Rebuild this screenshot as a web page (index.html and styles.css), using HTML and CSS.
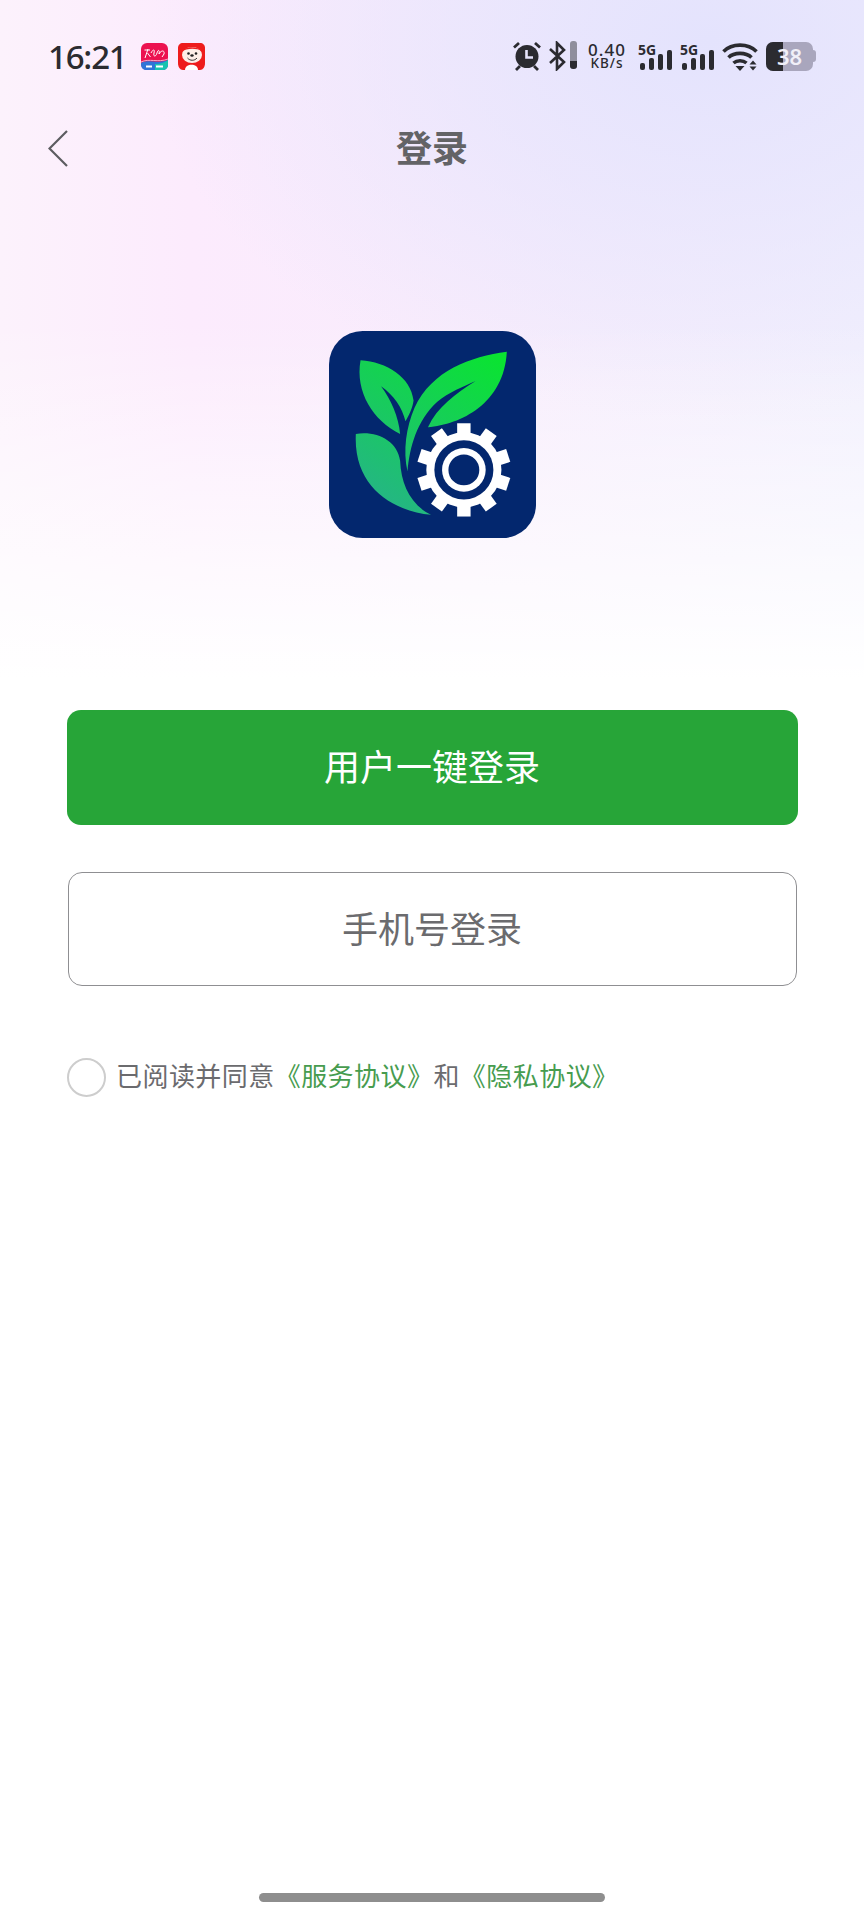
FILE: index.html
```html
<!DOCTYPE html>
<html lang="zh-CN">
<head>
    <meta charset="UTF-8">
    <meta name="viewport" content="width=device-width, initial-scale=1.0">
    <title>登录</title>
    <link rel="stylesheet" href="styles.css">
</head>
<body>
    <div class="page">
        <div class="status-bar">
            <span class="time">16:21</span>
            <svg class="app-icon" viewBox="0 0 27 27">
                <rect width="27" height="27" rx="6" fill="#ec1250"/>
                <path d="M0 20 C8 16 17 21 27 17 V21 C27 25 25 27 21 27 H6 C2 27 0 25 0 21 Z" fill="#2f74d8"/>
                <path d="M14 21 C18 21.500 23 20 27 17 V21 C27 25 25 27 21 27 H14 Z" fill="#19c3b0"/>
                <path d="M0 19 C8 15 17 20 27 16" stroke="#f7a8c8" stroke-width="1" fill="none"/>
                <path d="M3.500 7 H9 M7 6 L4 15 M6.500 10 L9.500 14 M10 10 C12 6 14 6 13 10 C12 14 15 14 16 10 C17 6 19 7 18 11 C20 7 24 7 23 11 L21 14" stroke="#fff" stroke-width="1" fill="none"/>
                <path d="M5 23.500 H11 M15 23.500 H22" stroke="#fff" stroke-width="1.800"/>
            </svg>
            <svg class="app-icon app-icon-last" viewBox="0 0 27 27">
                <path d="M5 0 H22 C25 0 27 2 27 5 V20 C27 24 25 27 22 27 H5 C2 27 0 24 0 20 V5 C0 2 2 0 5 0 Z" fill="#ee1c1c"/>
                <path d="M7 27 C7 20 20 20 20 27 Z" fill="#fff"/>
                <ellipse cx="14" cy="12" rx="10" ry="8" fill="#fdeee8"/>
                <path d="M3 9 C6 3 20 3 24 8 C18 5 9 5 3 9 Z" fill="#ee1c1c"/>
                <circle cx="10.500" cy="10.500" r="1.300" fill="#222"/>
                <circle cx="18" cy="10.500" r="1.300" fill="#222"/>
                <ellipse cx="14" cy="12.500" rx="1.700" ry="1.200" fill="#222"/>
                <path d="M9.500 15 C12 18 16.500 18 19 15" stroke="#222" stroke-width="0.900" fill="none"/>
            </svg>
            <div class="status-right">
                <svg class="ic-alarm" viewBox="0 0 28 30">
                    <circle cx="14" cy="15.500" r="11.500" fill="#2b2b30"/>
                    <path d="M13.500 9 V16.500 H20" stroke="#e6e4fb" stroke-width="2.600" fill="none"/>
                    <path d="M1 6.500 L6 2 M27 6.500 L22 2 M7 25 L3 29 M21 25 L25 29" stroke="#2b2b30" stroke-width="2.800"/>
                </svg>
                <svg class="ic-bt" viewBox="0 0 28 30">
                    <path d="M1 8 L15 21 L8 28 V2 L15 9 L1 22" stroke="#2b2b30" stroke-width="2.600" fill="none"/>
                    <rect x="21" y="0" width="7" height="28" rx="3" fill="#8f8e9c"/>
                    <path d="M21 20 H28 V25 C28 27 26.500 28 24.500 28 C22.500 28 21 27 21 25 Z" fill="#2b2b30"/>
                </svg>
                <div class="speed">
                    <span class="speed-num">0.40</span>
                    <span class="speed-unit">KB/s</span>
                </div>
                <div class="signal">
                    <span class="signal-label">5G</span>
                    <div class="bars">
                        <i class="bar bar-1"></i><i class="bar bar-2"></i><i class="bar bar-3"></i><i class="bar bar-4"></i>
                    </div>
                </div>
                <div class="signal">
                    <span class="signal-label">5G</span>
                    <div class="bars">
                        <i class="bar bar-1"></i><i class="bar bar-2"></i><i class="bar bar-3"></i><i class="bar bar-4"></i>
                    </div>
                </div>
                <svg class="ic-wifi" viewBox="0 0 38 29">
                    <path d="M1.500 9.500 C10 1 26 1 34.500 9.500" stroke="#2b2b30" stroke-width="3.600" fill="none"/>
                    <path d="M6.500 15.500 C12 10 24 10 29.500 15.500" stroke="#2b2b30" stroke-width="3.600" fill="none"/>
                    <path d="M11.500 21 C15 18 21 18 24.500 21" stroke="#2b2b30" stroke-width="3.600" fill="none"/>
                    <path d="M13.500 24 H22.500 L18 29 Z" fill="#2b2b30"/>
                    <path d="M27.500 22.500 L31 18.500 L34.500 22.500 Z M27.500 24.500 H34.500 L31 28.500 Z" fill="#2b2b30"/>
                </svg>
                <div class="battery">
                    <div class="battery-body">
                        <div class="battery-level"></div>
                        <span class="battery-num">38</span>
                    </div>
                    <div class="battery-tip"></div>
                </div>
            </div>
        </div>

        <div class="nav">
            <svg class="back" viewBox="0 0 20 37">
                <path d="M19 1 L1.500 18.500 L19 36" stroke="#5c5c60" stroke-width="2.200" fill="none"/>
            </svg>
            <h1 class="nav-title">登录</h1>
        </div>

        <svg class="logo" viewBox="28 33 617 617">
            <defs>
                <linearGradient id="leaf" gradientUnits="userSpaceOnUse" x1="500" y1="100" x2="210" y2="570">
                    <stop offset="0" stop-color="#0ae332"/>
                    <stop offset="1" stop-color="#25b585"/>
                </linearGradient>
            </defs>
            <rect x="28" y="33" width="617" height="617" rx="100" fill="#03276e"/>
            <path fill="url(#leaf)" d="M558 95 C450 110 335 150 283 262 C258 320 248 390 262 452 C268 380 290 300 350 245 C385 215 430 198 465 182 C405 220 350 260 323 320 C420 312 550 250 558 95 Z"/>
            <path fill="url(#leaf)" d="M122 120 C200 125 272 170 280 240 C278 260 266 285 256 302 C246 262 222 225 183 198 C212 236 236 290 240 340 C160 300 105 215 122 120 Z"/>
            <path fill="url(#leaf)" d="M108 340 C170 330 232 360 240 420 C243 490 270 550 332 581 C220 570 100 500 108 340 Z"/>
            <g fill="#fff">
                <circle cx="430" cy="447" r="112"/>
                <rect x="410" y="308" width="40" height="50"/>
                <rect x="410" y="308" width="40" height="50" transform="rotate(36 430 447)"/>
                <rect x="410" y="308" width="40" height="50" transform="rotate(72 430 447)"/>
                <rect x="410" y="308" width="40" height="50" transform="rotate(108 430 447)"/>
                <rect x="410" y="308" width="40" height="50" transform="rotate(144 430 447)"/>
                <rect x="410" y="308" width="40" height="50" transform="rotate(180 430 447)"/>
                <rect x="410" y="308" width="40" height="50" transform="rotate(216 430 447)"/>
                <rect x="410" y="308" width="40" height="50" transform="rotate(252 430 447)"/>
                <rect x="410" y="308" width="40" height="50" transform="rotate(288 430 447)"/>
                <rect x="410" y="308" width="40" height="50" transform="rotate(324 430 447)"/>
            </g>
            <circle cx="430" cy="447" r="88" fill="#03276e"/>
            <circle cx="430" cy="447" r="65" fill="#fff"/>
            <circle cx="430" cy="447" r="46" fill="#03276e"/>
        </svg>

        <button class="btn btn-primary" type="button">用户一键登录</button>
        <button class="btn btn-outline" type="button">手机号登录</button>

        <div class="agree">
            <span class="radio"></span>
            <p class="agree-text">已阅读并同意<a class="link">《服务协议》</a>和<a class="link">《隐私协议》</a></p>
        </div>

        <div class="home-bar"></div>
    </div>
</body>
</html>
```

FILE: styles.css
```css
* {
    box-sizing: border-box;
}
body {
    margin: 0;
    font-family: "Noto Sans CJK SC", "Noto Sans", sans-serif;
    background: #fff;
}
.page {
    display: flex;
    flex-direction: column;
    width: 864px;
    height: 1920px;
    background:
        linear-gradient(to bottom, rgba(255, 255, 255, 0) 320px, #fff 680px),
        radial-gradient(ellipse 560px 380px at 710px 40px, #e4e3fd 0, rgba(230, 228, 253, 0.65) 45%, rgba(236, 232, 253, 0) 100%),
        linear-gradient(to right, #fcf2fc 0, #fcebfd 22%, #f8ecfc 55%, #f1effd 100%);
}
.status-bar {
    display: flex;
    align-items: center;
    height: 100px;
    padding: 12px 48px 0 48px;
    color: #2b2b30;
}
.time {
    font-family: "Noto Sans", sans-serif;
    font-size: 33px;
    font-weight: 500;
    letter-spacing: -1.2px;
    margin-right: 15px;
}
.app-icon {
    width: 27px;
    height: 27px;
    margin-right: 10px;
}
.status-right {
    display: flex;
    align-items: center;
    margin-left: auto;
}
.ic-alarm {
    width: 28px;
    height: 30px;
    margin-right: 8px;
}
.ic-bt {
    width: 28px;
    height: 30px;
    margin-right: 11px;
}
.speed {
    display: flex;
    flex-direction: column;
    align-items: center;
    width: 38px;
    margin-right: 12px;
    font-family: "Noto Sans", sans-serif;
    font-weight: 500;
}
.speed-num {
    font-size: 17px;
    letter-spacing: 1px;
    line-height: 15px;
}
.speed-unit {
    font-size: 13.5px;
    letter-spacing: 1px;
    line-height: 13px;
}
.signal {
    position: relative;
    width: 34px;
    height: 30px;
    margin-right: 8px;
}
.signal-label {
    position: absolute;
    left: 0;
    top: 1px;
    font-family: "Noto Sans", sans-serif;
    font-size: 14px;
    font-weight: 700;
    line-height: 16px;
}
.bars {
    position: absolute;
    right: 0;
    bottom: 1px;
    display: flex;
    align-items: flex-end;
    gap: 4px;
}
.bar {
    display: block;
    width: 5px;
    background: #2b2b30;
    border-radius: 2px;
}
.bar-1 {
    height: 7px;
}
.bar-2 {
    height: 12px;
}
.bar-3 {
    height: 16px;
}
.bar-4 {
    height: 20px;
}
.ic-wifi {
    width: 38px;
    height: 29px;
    margin-right: 6px;
}
.battery {
    display: flex;
    align-items: center;
    width: 50px;
}
.battery-body {
    position: relative;
    display: flex;
    width: 47px;
    height: 29px;
    border-radius: 7px;
    background: #a9a6bd;
}
.battery-tip {
    width: 3px;
    height: 12px;
    border-radius: 0 3px 3px 0;
    background: #a9a6bd;
}
.battery-level {
    width: 17px;
    height: 100%;
    border-radius: 7px 0 0 7px;
    background: #2b2b30;
}
.battery-num {
    position: absolute;
    left: 11px;
    top: 0;
    font-family: "Noto Sans", sans-serif;
    font-size: 22px;
    font-weight: 600;
    line-height: 29px;
    color: #f0eff8;
}
.nav {
    position: relative;
    display: flex;
    align-items: center;
    justify-content: center;
    height: 98px;
}
.back {
    position: absolute;
    left: 48px;
    top: 30px;
    width: 20px;
    height: 37px;
}
.nav-title {
    margin: 0;
    padding-bottom: 6px;
    font-size: 36px;
    font-weight: 700;
    color: #636366;
}
.logo {
    display: block;
    width: 207px;
    height: 207px;
    margin: 133px auto 0;
}
.btn {
    display: block;
    padding: 0 0 5px;
    font-family: inherit;
    font-size: 36px;
    cursor: pointer;
}
.btn-primary {
    width: 731px;
    height: 115px;
    margin: 172px auto 0;
    background: #27a538;
    color: #fff;
    border: none;
    border-radius: 14px;
}
.btn-outline {
    width: 729px;
    height: 114px;
    margin: 47px auto 0;
    background: transparent;
    color: #6b6b6e;
    border: 1px solid #8f8f92;
    border-radius: 14px;
}
.agree {
    display: flex;
    align-items: center;
    margin: 72px 0 0 67px;
}
.radio {
    width: 39px;
    height: 39px;
    margin-right: 10px;
    border: 2.5px solid #cdcdcd;
    border-radius: 50%;
}
.agree-text {
    margin: 0;
    padding-bottom: 5px;
    font-size: 26px;
    line-height: 30px;
    letter-spacing: 0.45px;
    color: #6b6b6e;
}
.link {
    color: #479c4f;
}
.home-bar {
    width: 346px;
    height: 9px;
    margin: auto auto 18px;
    background: #8e8e8e;
    border-radius: 5px;
}
```
